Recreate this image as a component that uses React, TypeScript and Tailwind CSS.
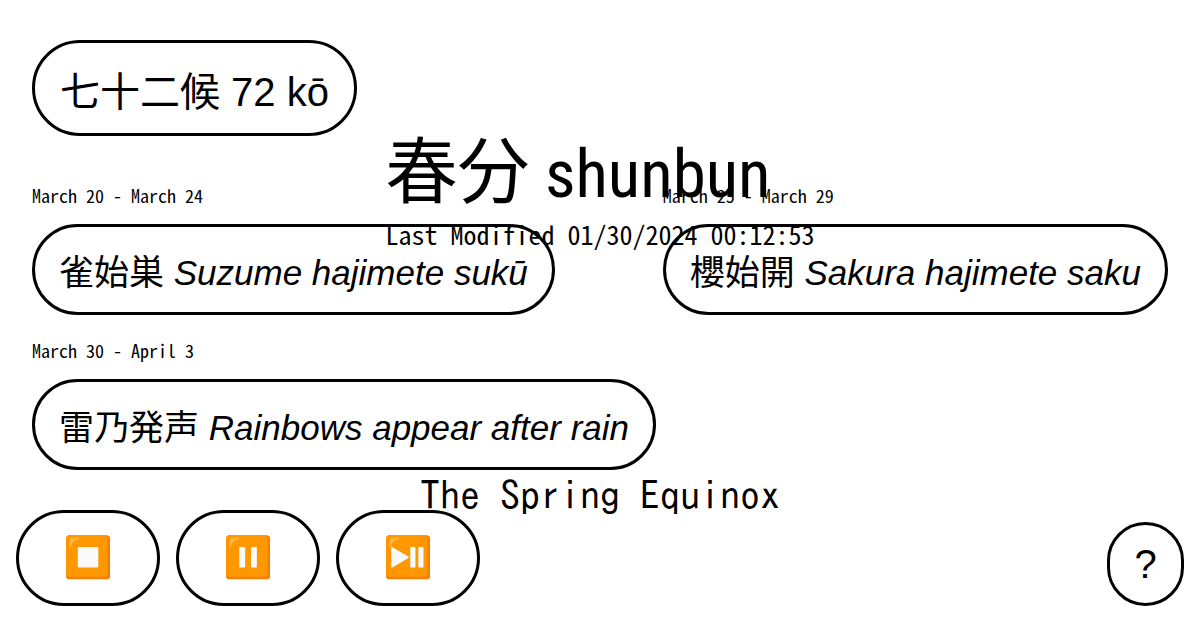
import type { ReactNode } from "react";

const SANS = "font-['Liberation_Sans','Noto_Sans_CJK_JP',sans-serif]";
const MONO = "font-['Noto_Sans_Mono_CJK_JP',monospace]";

const seasons = [
  { dates: "March 20 - March 24", kanji: "雀始巣", reading: "Suzume hajimete sukū" },
  { dates: "March 25 - March 29", kanji: "櫻始開", reading: "Sakura hajimete saku" },
  { dates: "March 30 - April 3", kanji: "雷乃発声", reading: "Rainbows appear after rain" },
];

function RoundButton({ label, children }: { label: string; children: ReactNode }) {
  return (
    <button
      type="button"
      aria-label={label}
      className="flex h-24 w-36 items-center justify-center rounded-[48px] border-3 border-black text-[40px] font-['Noto_Color_Emoji']"
    >
      {children}
    </button>
  );
}

export default function App() {
  return (
    <div className={`relative min-h-screen bg-white text-black ${SANS}`}>
      <main className="px-8 pt-10 pb-40">
        <a
          href="#about"
          className="inline-flex h-24 items-center rounded-[48px] border-3 border-black px-[25px] pt-2 text-[40px] leading-[48px]"
        >
          七十二候 72 kō
        </a>
        <ul className="mt-[47px] flex flex-wrap justify-between gap-y-[23px]">
          {seasons.map((s) => (
            <li key={s.dates} className="flex flex-col items-start gap-[17px]">
              <p className={`text-[18px] leading-6 ${MONO}`}>{s.dates}</p>
              <a
                href="#season"
                className="flex h-[91px] items-center rounded-[46px] border-3 border-black px-6 pt-1.5 text-[35px] leading-[44px] whitespace-pre"
              >
                <span>{s.kanji} </span>
                <em>{s.reading}</em>
              </a>
            </li>
          ))}
        </ul>
      </main>

      <div className="pointer-events-none absolute inset-x-0 top-[126px] flex flex-col items-center">
        <header>
          <h1 className="text-[72px] leading-[80px] font-['Noto_Sans_CJK_JP',sans-serif]">
            春分<span className="text-[67px] font-['Roboto_Condensed',sans-serif]"> shunbun</span>
          </h1>
          <p className={`mt-1 text-[26px] leading-8 ${MONO}`}>Last Modified 01/30/2024 00:12:53</p>
        </header>
        <h2 className="mt-[223px] text-[40px] leading-[44px] font-['IPAGothic','Noto_Sans_Mono_CJK_JP',monospace]">
          The Spring Equinox
        </h2>
      </div>

      <footer className="absolute inset-x-4 bottom-6 flex items-end justify-between">
        <div className="flex gap-4">
          <RoundButton label="Stop">⏹️</RoundButton>
          <RoundButton label="Pause">⏸️</RoundButton>
          <RoundButton label="Play or pause">⏯️</RoundButton>
        </div>
        <button
          type="button"
          aria-label="Help"
          className="flex h-[84px] w-[77px] items-center justify-center rounded-[39px] border-3 border-black text-[40px] leading-[48px]"
        >
          ?
        </button>
      </footer>
    </div>
  );
}
